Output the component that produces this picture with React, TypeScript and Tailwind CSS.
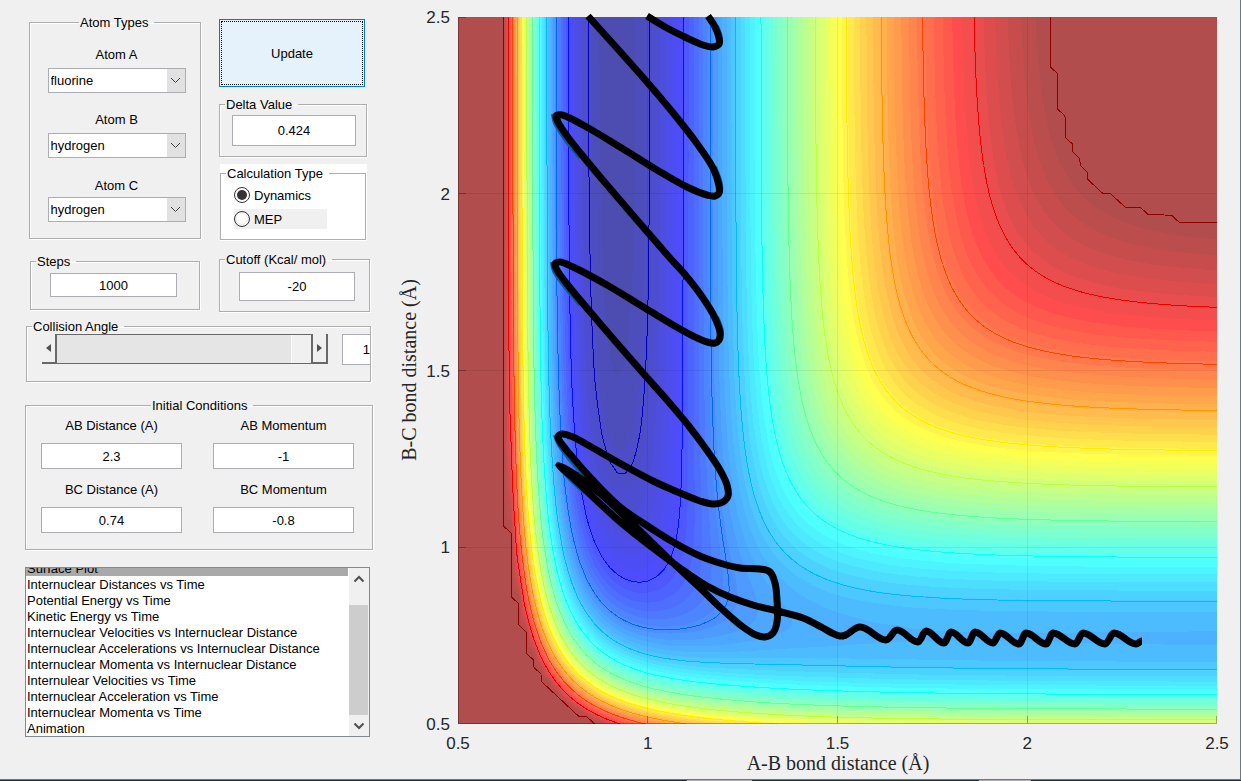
import { useMemo, useState } from 'react';
import type { ReactNode } from 'react';

/* ---------- potential energy surface (collinear LEPS, kcal/mol) ---------- */

const N = 101;
const STEP = 0.02;
const CUTOFF = -22.5;
const V_MIN = -141.4;
const V_MAX = -20;
const X0 = 458;
const Y0 = 724;
const PLOT_W = 759;
const PLOT_H = 707;

const HF = { d: 141.2, b: 2.2187, r: 0.917 };
const HH = { d: 109.4, b: 1.942, r: 0.7414 };
const SATO = 0.186;

function pair(m: { d: number; b: number; r: number }, dist: number) {
  const e = Math.exp(-m.b * (dist - m.r));
  const bond = m.d * (e * e - 2 * e);
  const anti = (m.d / 2) * ((1 - SATO) / (1 + SATO)) * (e * e + 2 * e);
  return { q: (bond + anti) / 2, j: (bond - anti) / 2 };
}

function energy(ab: number, bc: number) {
  const a = pair(HF, ab);
  const b = pair(HH, bc);
  const c = pair(HF, ab + bc);
  const s = (a.j - b.j) ** 2 + (b.j - c.j) ** 2 + (a.j - c.j) ** 2;
  return Math.min(CUTOFF, a.q + b.q + c.q - Math.sqrt(s / 2));
}

const px = (i: number) => X0 + (i * PLOT_W) / (N - 1);
const py = (j: number) => Y0 - (j * PLOT_H) / (N - 1);

function jet(p: number): [number, number, number] {
  const f = (c: number) => Math.max(0, Math.min(1, 1.5 - Math.abs(4 * p - c)));
  return [f(3) * 255, f(2) * 255, f(1) * 255];
}

function colour(p: number, alpha: number) {
  const c = jet(p).map((v) => Math.round(v * alpha + 255 * (1 - alpha)));
  return `rgb(${c[0]},${c[1]},${c[2]})`;
}

type Pt = [number, number, number];

function buildSurface() {
  const v: number[][] = [];
  for (let j = 0; j < N; j++) {
    v.push([]);
    for (let i = 0; i < N; i++) v[j].push(energy(0.5 + i * STEP, 0.5 + j * STEP));
  }

  const cell = (i: number, j: number): Pt[] => [
    [px(i), py(j), v[j][i]],
    [px(i + 1), py(j), v[j][i + 1]],
    [px(i + 1), py(j + 1), v[j + 1][i + 1]],
    [px(i), py(j + 1), v[j + 1][i]],
  ];

  const crossing = (a: Pt, b: Pt, level: number) => {
    const t = (level - a[2]) / (b[2] - a[2]);
    return `${(a[0] + t * (b[0] - a[0])).toFixed(2)} ${(a[1] + t * (b[1] - a[1])).toFixed(2)}`;
  };

  const region = (level: number) => {
    let d = '';
    for (let j = 0; j < N - 1; j++) {
      let run = -1;
      for (let i = 0; i <= N - 1; i++) {
        const inGrid = i < N - 1;
        const c = inGrid ? cell(i, j) : [];
        const above = c.filter((p) => p[2] >= level).length;
        if (inGrid && above === 4) {
          if (run < 0) run = i;
          continue;
        }
        if (run >= 0) {
          d += `M${px(run).toFixed(2)} ${py(j).toFixed(2)}H${px(i).toFixed(2)}V${py(j + 1).toFixed(2)}H${px(run).toFixed(2)}Z`;
          run = -1;
        }
        if (above > 0) {
          const pts: string[] = [];
          c.forEach((a, k) => {
            const b = c[(k + 1) % 4];
            if (a[2] >= level) pts.push(`${a[0].toFixed(2)} ${a[1].toFixed(2)}`);
            if (a[2] >= level !== b[2] >= level) pts.push(crossing(a, b, level));
          });
          d += `M${pts.join('L')}Z`;
        }
      }
    }
    return d;
  };

  const line = (level: number) => {
    let d = '';
    for (let j = 0; j < N - 1; j++) {
      for (let i = 0; i < N - 1; i++) {
        const c = cell(i, j);
        const pts: string[] = [];
        c.forEach((a, k) => {
          const b = c[(k + 1) % 4];
          if (a[2] >= level !== b[2] >= level) pts.push(crossing(a, b, level));
        });
        if (pts.length >= 2) d += `M${pts[0]}L${pts[1]}`;
      }
    }
    return d;
  };

  const bands = [];
  for (let k = 1; k < 63; k++) {
    const level = V_MIN + ((V_MAX - V_MIN) * k) / 64;
    bands.push({ d: region(level), fill: colour((k + 1) / 64, 0.7) });
  }
  const lines = [{ d: line(CUTOFF - 0.001), stroke: '#8f0000' }];
  for (let k = 0; k < 11; k++) {
    const level = -33 - 10.36 * k;
    lines.push({ d: line(level), stroke: colour((level - V_MIN + 2) / (V_MAX - V_MIN + 2), 1) });
  }
  return { bands, lines };
}

/* ---------- trajectory ---------- */

const WAVES: [number, number][] = [
  [1142, 641], [1136, 644], [1114, 633], [1105, 644], [1083, 633], [1075, 644], [1053, 633],
  [1046, 644], [1026, 633], [1019, 644], [1000, 633], [993, 643], [975, 632], [968, 643],
  [951, 632], [944, 643], [926, 631], [918, 642], [897, 630], [886, 640], [860, 627], [842, 636],
];

const PATH: [number, number][] = [
  [846, 635], [840, 636], [832, 633], [823, 628], [803, 618], [777, 611], [753, 605], [730, 597],
  [707, 586], [687, 573], [653, 548], [618, 520], [573, 478], [559, 465], [583, 480], [602, 495],
  [637, 528], [670, 560], [700, 588], [723, 610], [743, 627], [756, 635], [765, 637], [773, 633],
  [777, 622], [777, 600], [775, 583], [770, 572], [760, 569], [740, 568], [723, 564], [700, 556],
  [673, 542], [643, 523], [620, 507], [588, 475], [569, 453], [561, 443], [558, 437], [562, 434],
  [573, 437], [593, 448], [623, 465], [653, 481], [680, 493], [700, 501], [713, 504], [723, 502],
  [728, 496], [727, 485], [720, 470], [706, 449], [688, 425], [667, 400], [643, 373], [597, 320],
  [567, 284], [557, 270], [555, 264], [560, 262], [573, 267], [607, 285], [640, 305], [673, 325],
  [693, 336], [707, 342], [715, 343], [719, 340], [720, 333], [715, 318], [703, 298], [687, 277],
  [670, 258], [607, 185], [582, 155], [567, 136], [558, 122], [556, 116], [562, 115], [583, 125],
  [620, 147], [657, 170], [687, 187], [707, 195], [715, 196], [719, 193], [719, 186], [713, 168],
  [698, 145], [674, 114], [647, 82], [588, 16],
];

const TOP: [number, number][] = [
  [647, 16], [667, 28], [687, 38], [703, 45], [713, 47], [719, 44], [719, 38], [715, 27], [708, 16],
];

/* Where the curve dips under the translucent surface at its turning points. */
const SUBMERGED: [number, number][][] = [
  [[553, 114], [555, 123], [565, 139], [580, 158]],
  [[552, 262], [554, 271], [565, 287], [580, 305]],
  [[555, 435], [558, 443], [567, 456], [588, 480]],
  [[556, 464], [570, 479], [585, 493]],
  [[717, 26], [721, 38], [720, 46]],
  [[715, 167], [721, 184], [721, 193]],
  [[717, 317], [722, 331], [721, 340]],
];

/* Centripetal Catmull-Rom spline through the points. */
function smooth(p: [number, number][]) {
  const gap = (a: number[], b: number[]) => Math.sqrt(Math.hypot(a[0] - b[0], a[1] - b[1]));
  const control = (a: number[], b: number[], c: number[]) => {
    const m = gap(a, b);
    const n = gap(b, c);
    if (m === 0) return b;
    return [0, 1].map(
      (k) => (m * m * c[k] - n * n * a[k] + (2 * m * m + 3 * m * n + n * n) * b[k]) / (3 * m * (m + n)),
    );
  };
  let d = `M${p[0][0]} ${p[0][1]}`;
  for (let i = 0; i < p.length - 1; i++) {
    const a = p[Math.max(0, i - 1)];
    const b = p[i];
    const c = p[i + 1];
    const e = p[Math.min(p.length - 1, i + 2)];
    const f = control(a, b, c);
    const g = control(e, c, b);
    d += `C${f[0].toFixed(2)} ${f[1].toFixed(2)} ${g[0].toFixed(2)} ${g[1].toFixed(2)} ${c[0]} ${c[1]}`;
  }
  return d;
}

function waves(p: [number, number][]) {
  let d = `M${p[0][0]} ${p[0][1]}`;
  for (let i = 1; i < p.length; i++) {
    const m = (p[i][0] - p[i - 1][0]) * 0.36;
    d += `C${p[i - 1][0] + m} ${p[i - 1][1]} ${p[i][0] - m} ${p[i][1]} ${p[i][0]} ${p[i][1]}`;
  }
  return d;
}

const TICKS = ['0.5', '1', '1.5', '2', '2.5'];

function SurfacePlot() {
  const { bands, lines } = useMemo(buildSurface, []);
  return (
    <svg viewBox="400 0 840 779" className="block h-auto w-full overflow-visible" role="img" aria-label="Surface Plot">
      <clipPath id="axes">
        <rect x="458" y="17" width="759" height="707" />
      </clipPath>
      <g clipPath="url(#axes)" shapeRendering="crispEdges">
        <rect x="458" y="17" width="759" height="707" fill={colour(1 / 64, 0.7)} />
        {bands.map((b, k) => (
          <path key={k} d={b.d} fill={b.fill} />
        ))}
        {lines.map((l, k) => (
          <path key={k} d={l.d} stroke={l.stroke} strokeWidth="1" fill="none" />
        ))}
        {[1, 2, 3].map((k) => (
          <g key={k} stroke="#000000" strokeOpacity="0.07">
            <path d={`M${X0 + (PLOT_W * k) / 4} 17V724`} />
            <path d={`M458 ${Y0 - (PLOT_H * k) / 4}H1217`} />
          </g>
        ))}
        <g stroke="#000000" strokeOpacity="0.3" fill="none">
          <path d="M458.5 17V723.5H1217" />
          {[1, 2, 3].map((k) => (
            <path key={k} d={`M${X0 + (PLOT_W * k) / 4} 723V716M459 ${Y0 - (PLOT_H * k) / 4}H466`} />
          ))}
          <path d="M1216.5 723V716M459 17.5H466" />
        </g>
      </g>
      <g fill="none" stroke="#0b5aa6" strokeWidth="4">
        {SUBMERGED.map((s, k) => (
          <path key={k} d={smooth(s)} />
        ))}
      </g>
      <g fill="none" stroke="#000000" strokeLinejoin="round">
        <path d={waves(WAVES)} strokeWidth="7" />
        <path d={smooth(PATH)} strokeWidth="7" />
        <path d={smooth(TOP)} strokeWidth="7" />
      </g>
      <g className="font-['Liberation_Sans',Arial,sans-serif] text-[17px]" fill="#262626">
        {TICKS.map((t, k) => (
          <text key={t} x={458 + (PLOT_W * k) / 4} y="749" textAnchor="middle">
            {t}
          </text>
        ))}
        {TICKS.map((t, k) => (
          <text key={t} x="450" y={730 - (PLOT_H * k) / 4} textAnchor="end">
            {t}
          </text>
        ))}
      </g>
      <g className="font-['Liberation_Serif','Times_New_Roman',serif] text-[20px]" fill="#262626" textAnchor="middle">
        <text x="838" y="770">
          A-B bond distance (Å)
        </text>
        <text transform="translate(416 370) rotate(-90)">B-C bond distance (Å)</text>
      </g>
    </svg>
  );
}

/* ---------- controls ---------- */

function Group({ title, className, legend, children }: { title: string; className: string; legend: string; children: ReactNode }) {
  return (
    <fieldset className={`min-w-0 border border-[#adadad] shadow-[1px_1px_0_#ffffff,inset_1px_1px_0_#ffffff] ${className}`}>
      <legend className={`h-4 pr-[6px] pl-px leading-[18px] ${legend}`}>{title}</legend>
      {children}
    </fieldset>
  );
}

function Field({ label, value, className }: { label: string; value: string; className: string }) {
  return (
    <input
      type="text"
      aria-label={label}
      defaultValue={value}
      className={`block border border-[#abadb3] bg-white text-center outline-none ${className}`}
    />
  );
}

const ELEMENTS = ['hydrogen', 'fluorine', 'chlorine'];

function AtomSelect({ id, label, value, className }: { id: string; label: string; value: string; className: string }) {
  return (
    <div className={`flex flex-col items-center ${className}`}>
      <label htmlFor={id} className="h-4 leading-[18px]">
        {label}
      </label>
      <div className="relative w-[138px]">
        <select
          id={id}
          defaultValue={value}
          className="block h-[25px] w-full appearance-none border border-[#abadb3] bg-white pl-[2px] outline-none"
        >
          {ELEMENTS.map((e) => (
            <option key={e}>{e}</option>
          ))}
        </select>
        <span className="pointer-events-none absolute inset-y-px right-px flex w-[18px] items-center justify-center bg-[#e1e1e1]">
          <svg width="11" height="7" viewBox="0 0 11 7" fill="none" stroke="#404040">
            <path d="M1 1L5.5 5.5L10 1" />
          </svg>
        </span>
      </div>
    </div>
  );
}

function Radio({ label, checked, onChange, className }: { label: string; checked: boolean; onChange: () => void; className: string }) {
  return (
    <label className={`flex items-center gap-1 ${className}`}>
      <input
        type="radio"
        name="calculation"
        checked={checked}
        onChange={onChange}
        className="h-4 w-4 appearance-none rounded-full border border-[#333333] bg-white bg-clip-content p-[2px] checked:bg-[#333333]"
      />
      <span className="pt-px">{label}</span>
    </label>
  );
}

const CONDITIONS = [
  ['AB Distance (A)', '2.3'],
  ['AB Momentum', '-1'],
  ['BC Distance (A)', '0.74'],
  ['BC Momentum', '-0.8'],
];

const PLOTS = [
  'Surface Plot',
  'Internuclear Distances vs Time',
  'Potential Energy vs Time',
  'Kinetic Energy vs Time',
  'Internuclear Velocities vs Internuclear Distance',
  'Internuclear Accelerations vs Internuclear Distance',
  'Internuclear Momenta vs Internuclear Distance',
  'Internulear Velocities vs Time',
  'Internuclear Acceleration vs Time',
  'Internuclear Momenta vs Time',
  'Animation',
];

const ARROW =
  'flex h-[30px] w-[15px] shrink-0 items-center justify-center border-r-2 border-b-2 border-[#696969] bg-[#f0f0f0]';

export default function App() {
  const [mode, setMode] = useState('Dynamics');
  const [plot, setPlot] = useState('Surface Plot');
  const [angle, setAngle] = useState(180);

  return (
    <div className="flex min-h-screen flex-col bg-[#f0f0f0] font-['Liberation_Sans',Arial,sans-serif] text-[13px] leading-4 text-black">
      <main className="flex flex-1 border-r border-[#5f7d8a]">
        <section className="w-[400px] shrink-0 pl-[25px]">
          <div className="flex gap-[18px] pl-1">
            <div className="w-[172px] pt-[14px]">
              <Group title="Atom Types" className="h-[225px] pl-[3px]" legend="ml-[46px]">
                <AtomSelect id="atom-a" label="Atom A" value="fluorine" className="mt-4 gap-[6px]" />
                <AtomSelect id="atom-b" label="Atom B" value="hydrogen" className="mt-[18px] gap-[6px]" />
                <AtomSelect id="atom-c" label="Atom C" value="hydrogen" className="mt-[19px] gap-1" />
              </Group>
              <Group title="Steps" className="mt-[14px] ml-px h-[57px] w-[170px]" legend="ml-[5px]">
                <Field label="Steps" value="1000" className="ml-[19px] mt-1 h-[24px] w-[127px]" />
              </Group>
            </div>

            <div className="w-[151px] pt-[19px]">
              <button
                type="button"
                className="block h-[68px] w-[146px] border border-[#0078d7] bg-[#e5f1fb] p-px"
              >
                <span className="flex h-full items-center justify-center border border-dotted border-black pt-[2px]">
                  Update
                </span>
              </button>
              <Group title="Delta Value" className="mt-[9px] h-[61px] w-[148px]" legend="ml-[5px]">
                <Field label="Delta Value" value="0.424" className="ml-[12px] mt-[3px] h-[31px] w-[124px]" />
              </Group>
              <div className="mt-[7px] ml-px h-[77px] w-[147px] bg-white pt-px">
                <Group title="Calculation Type" className="h-[75px] w-[146px] pl-[13px]" legend="-ml-[8px] bg-white">
                  <Radio
                    label="Dynamics"
                    checked={mode === 'Dynamics'}
                    onChange={() => setMode('Dynamics')}
                    className="mt-1 h-[20px] w-[93px]"
                  />
                  <Radio
                    label="MEP"
                    checked={mode === 'MEP'}
                    onChange={() => setMode('MEP')}
                    className="mt-1 h-[20px] w-[93px] bg-[#f0f0f0]"
                  />
                </Group>
              </div>
              <Group title="Cutoff (Kcal/ mol)" className="mt-[10px] h-[61px] w-[151px]" legend="ml-[5px]">
                <Field label="Cutoff (Kcal/ mol)" value="-20" className="ml-[19px] mt-[5px] h-[29px] w-[116px]" />
              </Group>
            </div>
          </div>

          <Group title="Collision Angle" className="mt-[6px] ml-px h-[64px] w-[345px]" legend="ml-[5px]">
            <div className="ml-[15px] flex overflow-hidden">
              <button type="button" aria-label="Decrease angle" className={ARROW} onClick={() => setAngle(Math.max(0, angle - 1))}>
                <svg width="5" height="8" viewBox="0 0 5 8" fill="#505050">
                  <path d="M5 0V8L0 4Z" />
                </svg>
              </button>
              <input
                type="range"
                aria-label="Collision Angle"
                min="0"
                max="180"
                value={angle}
                onChange={(e) => setAngle(Number(e.target.value))}
                className="m-0 h-[30px] w-[256px] shrink-0 appearance-none border-t border-b border-[#696969] bg-[#e5e5e5] [&::-webkit-slider-thumb]:h-[28px] [&::-webkit-slider-thumb]:w-[22px] [&::-webkit-slider-thumb]:appearance-none [&::-webkit-slider-thumb]:border-r-2 [&::-webkit-slider-thumb]:border-l [&::-webkit-slider-thumb]:border-r-[#696969] [&::-webkit-slider-thumb]:border-l-white [&::-webkit-slider-thumb]:bg-[#f0f0f0]"
              />
              <button type="button" aria-label="Increase angle" className={ARROW} onClick={() => setAngle(Math.min(180, angle + 1))}>
                <svg width="5" height="8" viewBox="0 0 5 8" fill="#505050">
                  <path d="M0 0V8L5 4Z" />
                </svg>
              </button>
              <input
                type="text"
                aria-label="Angle in degrees"
                value={angle}
                onChange={(e) => setAngle(Number(e.target.value) || 0)}
                className="ml-[14px] h-[31px] w-[63px] shrink-0 border border-[#abadb3] bg-white text-center outline-none"
              />
            </div>
          </Group>

          <Group title="Initial Conditions" className="mt-[15px] h-[153px] w-[348px]" legend="ml-[125px]">
            <div className="grid grid-cols-[141px_141px] gap-x-[31px] gap-y-[12px] pt-1 pl-[15px]">
              {CONDITIONS.map(([label, value]) => (
                <div key={label} className="flex flex-col items-center gap-[10px]">
                  <span className="h-4 leading-[18px]">{label}</span>
                  <Field label={label} value={value} className="h-[26px] w-full" />
                </div>
              ))}
            </div>
          </Group>

          <div className="mt-[17px] flex h-[170px] w-[345px] overflow-hidden border border-[#828790] bg-white">
            <ul role="listbox" aria-label="Plot" className="-mt-2 flex-1 leading-[18px]">
              {PLOTS.map((p) => (
                <li
                  key={p}
                  role="option"
                  aria-selected={p === plot}
                  onClick={() => setPlot(p)}
                  className={p === plot ? 'h-4 bg-[#a9a9a9] pl-px' : 'h-4 pl-px'}
                >
                  {p}
                </li>
              ))}
            </ul>
            <div className="ml-px flex w-[20px] flex-col bg-[#f0f0f0]">
              <button type="button" aria-label="Scroll up" className="flex h-[37px] justify-center pt-[7px]">
                <svg width="10" height="8" viewBox="0 0 10 8" fill="none" stroke="#505050" strokeWidth="2">
                  <path d="M0.5 6.5L5 2L9.5 6.5" />
                </svg>
              </button>
              <div className="mr-px h-[110px] bg-[#cdcdcd]" />
              <button type="button" aria-label="Scroll down" className="flex flex-1 items-center justify-center">
                <svg width="10" height="8" viewBox="0 0 10 8" fill="none" stroke="#505050" strokeWidth="2">
                  <path d="M0.5 1.5L5 6L9.5 1.5" />
                </svg>
              </button>
            </div>
          </div>
        </section>

        <section className="min-w-0 flex-1">
          <SurfacePlot />
        </section>
      </main>
      <footer className="flex h-[2px] border-t border-[#5f7d8a] bg-[#16303c]">
        <span className="ml-[687px] w-[65px] bg-[#a8b0b4]" />
        <span className="ml-[227px] w-[52px] bg-[#a8b0b4]" />
      </footer>
    </div>
  );
}
